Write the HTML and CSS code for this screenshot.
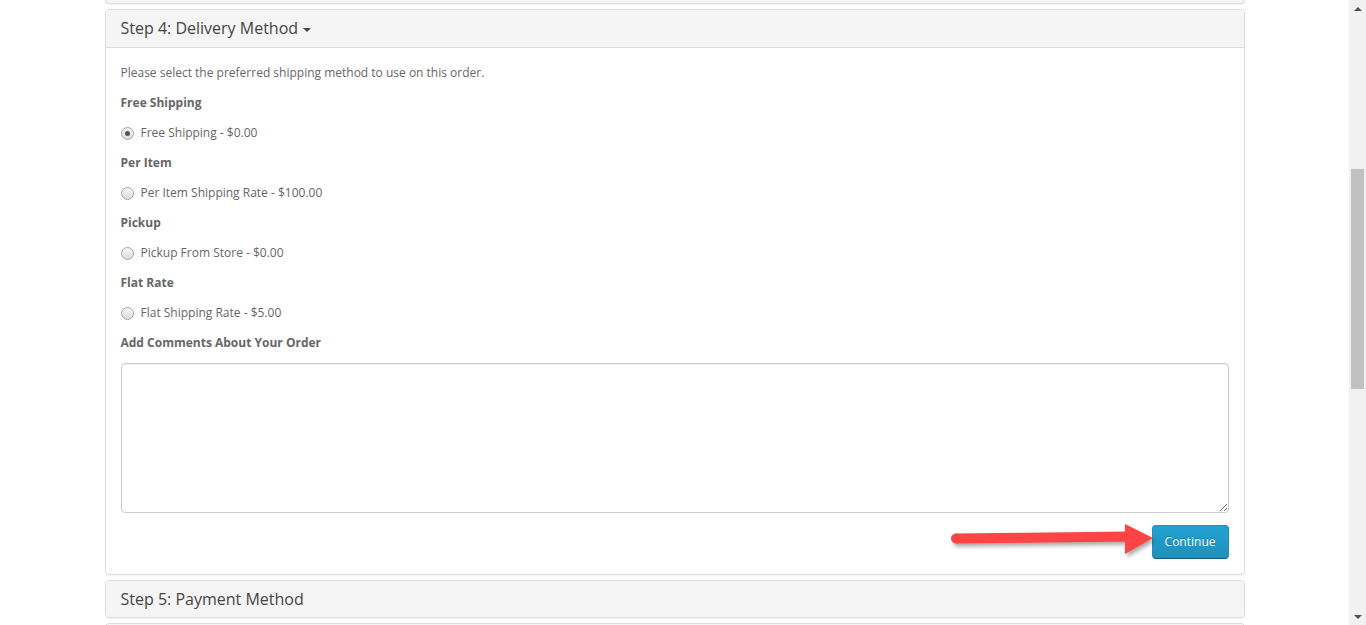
FILE: index.html
```html
<!DOCTYPE html>
<html lang="en">
<head>
<meta charset="utf-8">
<title>Checkout</title>
<link rel="stylesheet" href="styles.css">
</head>
<body>
<div class="viewport">
  <div class="page">
    <div class="container">
      <div class="panel-group">
        <div class="panel panel-stub"></div>

        <div class="panel">
          <div class="panel-heading">
            <h4 class="panel-title">Step 4: Delivery Method <span class="caret"></span></h4>
          </div>
          <div class="panel-body">
            <p class="line">Please select the preferred shipping method to use on this order.</p>

            <p class="line"><strong>Free Shipping</strong></p>
            <label class="radio"><span class="radio-dot checked"></span>Free Shipping - $0.00</label>

            <p class="line"><strong>Per Item</strong></p>
            <label class="radio"><span class="radio-dot"></span>Per Item Shipping Rate - $100.00</label>

            <p class="line"><strong>Pickup</strong></p>
            <label class="radio"><span class="radio-dot"></span>Pickup From Store - $0.00</label>

            <p class="line"><strong>Flat Rate</strong></p>
            <label class="radio"><span class="radio-dot"></span>Flat Shipping Rate - $5.00</label>

            <p class="line"><strong>Add Comments About Your Order</strong></p>
            <textarea class="form-control" rows="8"></textarea>

            <div class="buttons">
              <svg class="pointer" width="215" height="44" viewBox="0 0 215 44" aria-hidden="true">
                <g class="pointer-shape">
                  <path d="M11 15.5 L184 13.5 L184 23.5 L11 25.5 Z" fill="#fe4444"/>
                  <circle cx="11" cy="20.5" r="5" fill="#fe4444"/>
                  <polygon points="180,6 208,20 180,36" fill="#fe4444"/>
                </g>
              </svg>
              <button class="btn-primary" type="button">Continue</button>
            </div>
          </div>
        </div>

        <div class="panel">
          <div class="panel-heading">
            <h4 class="panel-title">Step 5: Payment Method</h4>
          </div>
        </div>

        <div class="panel panel-next"></div>
      </div>
    </div>
  </div>

  <div class="scrollbar">
    <span class="sb-arrow up"></span>
    <div class="sb-track">
      <div class="sb-thumb"></div>
    </div>
    <span class="sb-arrow down"></span>
  </div>
</div>
</body>
</html>
```

FILE: styles.css
```css
* {
  box-sizing: border-box;
}

html, body {
  margin: 0;
  padding: 0;
  height: 100%;
  overflow: hidden;
}

body {
  font-family: "Open Sans", "Liberation Sans", sans-serif;
  font-size: 12px;
  line-height: 20px;
  color: #666;
  background: #fff;
}

.viewport {
  display: flex;
  height: 625px;
}

.page {
  flex: 1;
  overflow: hidden;
}

.container {
  width: 1170px;
  margin: 0 auto;
  padding: 0 15px;
}

.panel-group {
  display: flex;
  flex-direction: column;
  gap: 5px;
}

.panel {
  background: #fff;
  border: 1px solid #ddd;
  border-radius: 4px;
  box-shadow: 0 1px 1px rgba(0, 0, 0, 0.05);
}

.panel-stub {
  height: 4px;
  border-top: none;
  border-radius: 0 0 4px 4px;
  background: #f5f5f5;
}

.panel-next {
  height: 10px;
  border-bottom: none;
  border-radius: 4px 4px 0 0;
  background: #f5f5f5;
}

.panel-heading {
  background: #f5f5f5;
  border-bottom: 1px solid #ddd;
  border-radius: 3px 3px 0 0;
  padding: 9px 15px 9px;
}

.panel > .panel-heading:last-child {
  border-bottom: none;
  border-radius: 3px;
  padding-bottom: 8px;
}

.panel-title {
  margin: 0;
  font-size: 16px;
  font-weight: 400;
  line-height: 19px;
  color: #444;
}

.caret {
  display: inline-block;
  width: 0;
  height: 0;
  margin-left: 1px;
  vertical-align: middle;
  border-top: 4px solid #444;
  border-left: 4px solid transparent;
  border-right: 4px solid transparent;
}

.panel-body {
  padding: 15px;
  display: flex;
  flex-direction: column;
  gap: 10px;
}

.line {
  margin: 0;
  height: 20px;
}

.line strong {
  font-weight: 700;
}

.radio {
  display: flex;
  align-items: center;
  height: 20px;
  gap: 7px;
}

.radio-dot {
  width: 13px;
  height: 13px;
  border-radius: 50%;
  border: 1px solid #a6a6a6;
  background: linear-gradient(#f8f8f8, #dcdcdc);
  display: flex;
  align-items: center;
  justify-content: center;
}

.radio-dot.checked::after {
  content: "";
  width: 5px;
  height: 5px;
  border-radius: 50%;
  background: #555;
}

.form-control {
  display: block;
  width: 100%;
  height: 150px;
  padding: 6px 12px;
  font: inherit;
  color: #555;
  border: 1px solid #ccc;
  border-radius: 4px;
  box-shadow: inset 0 1px 1px rgba(0, 0, 0, 0.075);
  resize: vertical;
}

.buttons {
  position: relative;
  display: flex;
  justify-content: flex-end;
  margin-top: 2px;
}

.btn-primary {
  font-family: inherit;
  font-size: 12px;
  line-height: 20px;
  height: 34px;
  padding: 6px 12px;
  color: #fff;
  text-shadow: 0 -1px 0 rgba(0, 0, 0, 0.25);
  background-color: #229ac8;
  background-image: linear-gradient(to bottom, #23a1d1, #1f90bb);
  border: 1px solid;
  border-color: #1f90bb #1f90bb #145e7a;
  border-radius: 4px;
  cursor: pointer;
}

.pointer {
  position: absolute;
  right: 69px;
  top: -7px;
  overflow: visible;
}

.pointer-shape {
  filter: drop-shadow(2px 3px 2px rgba(0, 0, 0, 0.35));
}

/* classic window scrollbar */
.scrollbar {
  width: 17px;
  flex: none;
  background: #f1f1f1;
  display: flex;
  flex-direction: column;
  align-items: center;
}

.sb-arrow {
  flex: none;
  height: 17px;
  display: flex;
  align-items: center;
  justify-content: center;
}

.sb-arrow::before {
  content: "";
  width: 0;
  height: 0;
  border-left: 4px solid transparent;
  border-right: 4px solid transparent;
}

.sb-arrow.up::before {
  border-bottom: 4px solid #505050;
}

.sb-arrow.down::before {
  border-top: 4px solid #505050;
}

.sb-track {
  flex: 1;
  width: 100%;
  padding-top: 152px;
}

.sb-thumb {
  width: 13px;
  height: 220px;
  margin: 0 auto;
  background: #c1c1c1;
}
```
